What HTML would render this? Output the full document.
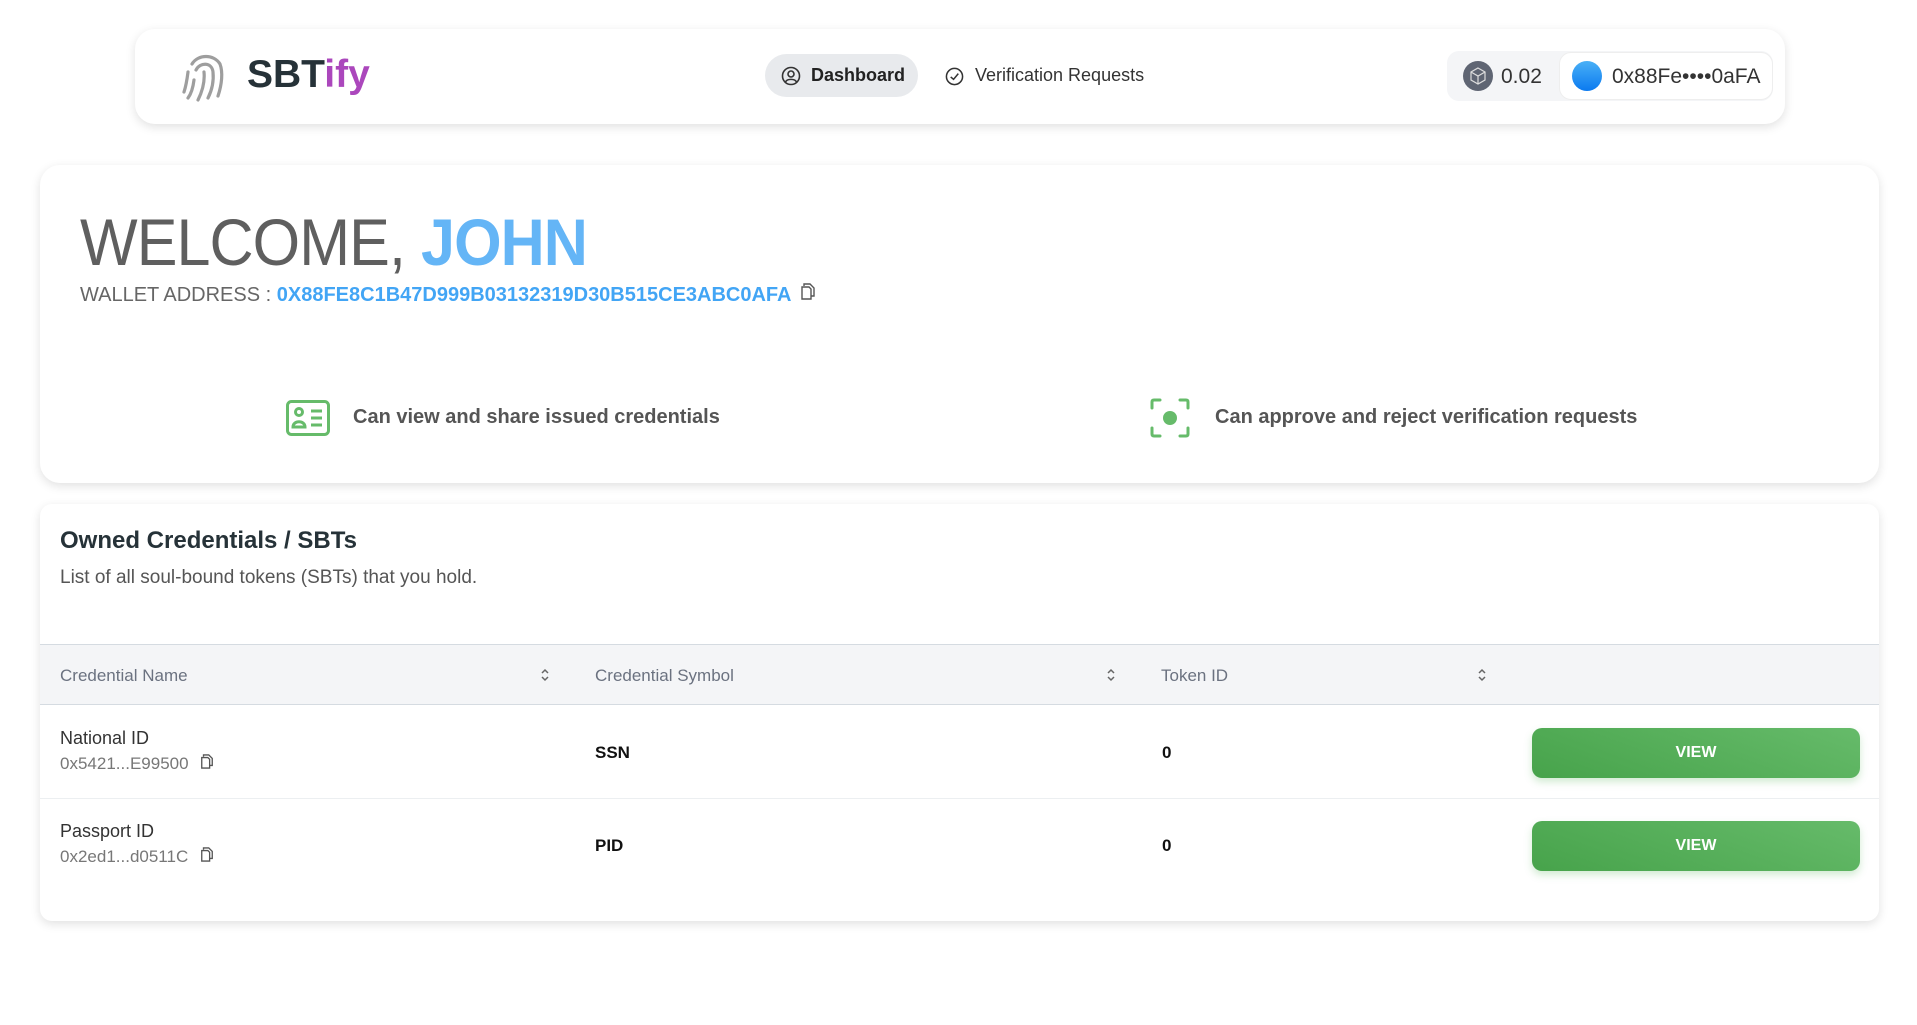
<!DOCTYPE html>
<html><head><meta charset="utf-8"><style>
*{box-sizing:border-box;margin:0;padding:0}
body{width:1917px;height:1025px;background:#fff;font-family:"Liberation Sans",Arial,sans-serif;position:relative;overflow:hidden}
.abs{position:absolute}
.card{position:absolute;background:#fff;border-radius:20px;box-shadow:0 3px 10px rgba(0,0,0,.12)}
.th{position:absolute;top:0;height:61px;line-height:61px;font-size:17px;color:#6b7280}
.sort{position:absolute;top:22px}
.btn{position:absolute;left:1532px;width:328px;height:50px;border-radius:10px;background:linear-gradient(20deg,#47a34b,#66bb6a);color:#fff;font-weight:bold;font-size:16px;text-align:center;line-height:50px;box-shadow:0 4px 8px rgba(76,175,80,.25)}
.name{position:absolute;left:20px;font-size:18px;color:#333}
.addr{position:absolute;left:20px;font-size:17px;color:#777}
.cell{position:absolute;font-size:17px;font-weight:bold;color:#111}
</style></head><body>

<div class="card" style="left:135px;top:29px;width:1650px;height:95px"></div>
<svg class="abs" style="left:180px;top:50px" width="50" height="52" viewBox="0 0 50 52" fill="none" stroke="#9e9e9e" stroke-width="3.2" stroke-linecap="round">
<path d="M12 14 C18 4 34 4 40 14 C43 22 42 34 38 46"/>
<path d="M8 22 C7 30 6 36 4 42"/>
<path d="M16 20 C20 12 32 12 33 22 C34 32 32 40 28 48"/>
<path d="M14 30 C13 38 11 44 8 48"/>
<path d="M24 22 C25 32 22 42 18 50"/>
</svg>
<div class="abs" style="left:247px;top:53px;font-size:39px;font-weight:bold;color:#263238">SBT<span style="color:#ab47bc">ify</span></div>

<div class="abs" style="left:765px;top:54px;width:153px;height:43px;border-radius:22px;background:#e8eaed"></div>
<svg class="abs" style="left:781px;top:66px" width="20" height="20" viewBox="0 0 20 20" fill="none" stroke="#333" stroke-width="1.6"><circle cx="10" cy="10" r="8.5"/><circle cx="10" cy="8" r="3"/><path d="M4.5 16 C6 12.5 14 12.5 15.5 16"/></svg>
<div class="abs" style="left:811px;top:65px;font-size:18px;font-weight:bold;color:#222">Dashboard</div>
<svg class="abs" style="left:945px;top:67px" width="19" height="19" viewBox="0 0 20 20" fill="none" stroke="#333" stroke-width="1.6"><circle cx="10" cy="10" r="8.5"/><path d="M6 10.5 L9 13 L14 7"/></svg>
<div class="abs" style="left:975px;top:65px;font-size:18px;color:#333">Verification Requests</div>

<div class="abs" style="left:1447px;top:51px;width:326px;height:50px;border-radius:12px;background:#f4f5f7"></div>
<div class="abs" style="left:1559px;top:52px;width:214px;height:48px;border-radius:12px;background:#fff;border:1px solid #eee"></div>
<svg class="abs" style="left:1463px;top:61px" width="30" height="30" viewBox="0 0 30 30"><circle cx="15" cy="15" r="15" fill="#5f6573"/><path d="M15 7 L22 11 L22 19 L15 23 L8 19 L8 11 Z M8 11 L15 15 L22 11 M15 15 L15 23" fill="none" stroke="#ddd" stroke-width="1.2"/></svg>
<div class="abs" style="left:1501px;top:65px;font-size:21px;color:#333">0.02</div>
<div class="abs" style="left:1572px;top:61px;width:30px;height:30px;border-radius:50%;background:linear-gradient(#49b0f6,#0b7af0)"></div>
<div class="abs" style="left:1612px;top:65px;font-size:21px;color:#333">0x88Fe••••0aFA</div>

<div class="card" style="left:40px;top:165px;width:1839px;height:318px"></div>
<div class="abs" style="left:80px;top:204px;font-size:66px;color:#5f5f5f;letter-spacing:-1px;transform:scaleX(0.925);transform-origin:left;white-space:nowrap">WELCOME, <span style="color:#64b5f6;font-weight:bold">JOHN</span></div>
<div class="abs" style="left:80px;top:284px;font-size:20px;color:#666;white-space:nowrap">WALLET ADDRESS : <span style="color:#42a5f5;font-weight:bold">0X88FE8C1B47D999B03132319D30B515CE3ABC0AFA</span></div>
<svg class="abs" style="left:800px;top:282px" width="16" height="19" viewBox="0 0 16 19" fill="none" stroke="#555" stroke-width="1.4"><path d="M4 4 L4 2 L10 2 L14 6 L14 14 L11 14"/><path d="M2 5 L9 5 L11 7 L11 17 L2 17 Z"/></svg>

<svg class="abs" style="left:286px;top:400px" width="44" height="36" viewBox="0 0 44 36" fill="none" stroke="#66bb6a" stroke-width="3"><rect x="1.5" y="1.5" width="41" height="33" rx="4"/><circle cx="13" cy="12" r="3.5"/><path d="M7 27 C7 20 19 20 19 27 Z"/><path d="M25 11 H36 M25 18 H36 M25 25 H36"/></svg>
<div class="abs" style="left:353px;top:406px;font-size:20px;font-weight:bold;color:#555">Can view and share issued credentials</div>
<svg class="abs" style="left:1150px;top:398px" width="40" height="40" viewBox="0 0 40 40" fill="none" stroke="#66bb6a" stroke-width="3" stroke-linecap="round"><path d="M2 10 V4 Q2 2 4 2 H10 M30 2 H36 Q38 2 38 4 V10 M38 30 V36 Q38 38 36 38 H30 M10 38 H4 Q2 38 2 36 V30"/><circle cx="20" cy="20" r="7" fill="#66bb6a" stroke="none"/></svg>
<div class="abs" style="left:1215px;top:406px;font-size:20px;font-weight:bold;color:#555">Can approve and reject verification requests</div>

<div class="card" style="left:40px;top:504px;width:1839px;height:417px;border-radius:12px">
<div class="abs" style="left:20px;top:23px;font-size:24px;font-weight:bold;color:#263238">Owned Credentials / SBTs</div>
<div class="abs" style="left:20px;top:63px;font-size:19px;color:#555">List of all soul-bound tokens (SBTs) that you hold.</div>
<div class="abs" style="left:0;top:140px;width:1839px;height:61px;background:#f4f5f7;border-top:1px solid #d5dbe1;border-bottom:1px solid #d5dbe1">
<div class="th" style="left:20px">Credential Name</div>
<div class="th" style="left:555px">Credential Symbol</div>
<div class="th" style="left:1121px">Token ID</div>
<svg class="sort" style="left:500px" width="10" height="16" viewBox="0 0 10 16" fill="none" stroke="#666" stroke-width="1.5"><path d="M2 6 L5 3 L8 6 M2 10 L5 13 L8 10"/></svg>
<svg class="sort" style="left:1066px" width="10" height="16" viewBox="0 0 10 16" fill="none" stroke="#666" stroke-width="1.5"><path d="M2 6 L5 3 L8 6 M2 10 L5 13 L8 10"/></svg>
<svg class="sort" style="left:1437px" width="10" height="16" viewBox="0 0 10 16" fill="none" stroke="#666" stroke-width="1.5"><path d="M2 6 L5 3 L8 6 M2 10 L5 13 L8 10"/></svg>
</div>
<div class="abs" style="left:0;top:294px;width:1839px;height:1px;background:#eceff1"></div>
<div class="name" style="top:224px">National ID</div>
<div class="addr" style="top:250px">0x5421...E99500</div>
<div class="name" style="top:317px">Passport ID</div>
<div class="addr" style="top:343px">0x2ed1...d0511C</div>
<svg class="abs" style="left:160px;top:249px" width="14" height="17" viewBox="0 0 16 19" fill="none" stroke="#555" stroke-width="1.5"><path d="M4 4 L4 2 L10 2 L14 6 L14 14 L11 14"/><path d="M2 5 L9 5 L11 7 L11 17 L2 17 Z"/></svg>
<svg class="abs" style="left:160px;top:342px" width="14" height="17" viewBox="0 0 16 19" fill="none" stroke="#555" stroke-width="1.5"><path d="M4 4 L4 2 L10 2 L14 6 L14 14 L11 14"/><path d="M2 5 L9 5 L11 7 L11 17 L2 17 Z"/></svg>
<div class="cell" style="left:555px;top:239px">SSN</div>
<div class="cell" style="left:555px;top:332px">PID</div>
<div class="cell" style="left:1122px;top:239px">0</div>
<div class="cell" style="left:1122px;top:332px">0</div>
</div>
<div class="btn" style="top:728px">VIEW</div>
<div class="btn" style="top:821px">VIEW</div>
</body></html>
